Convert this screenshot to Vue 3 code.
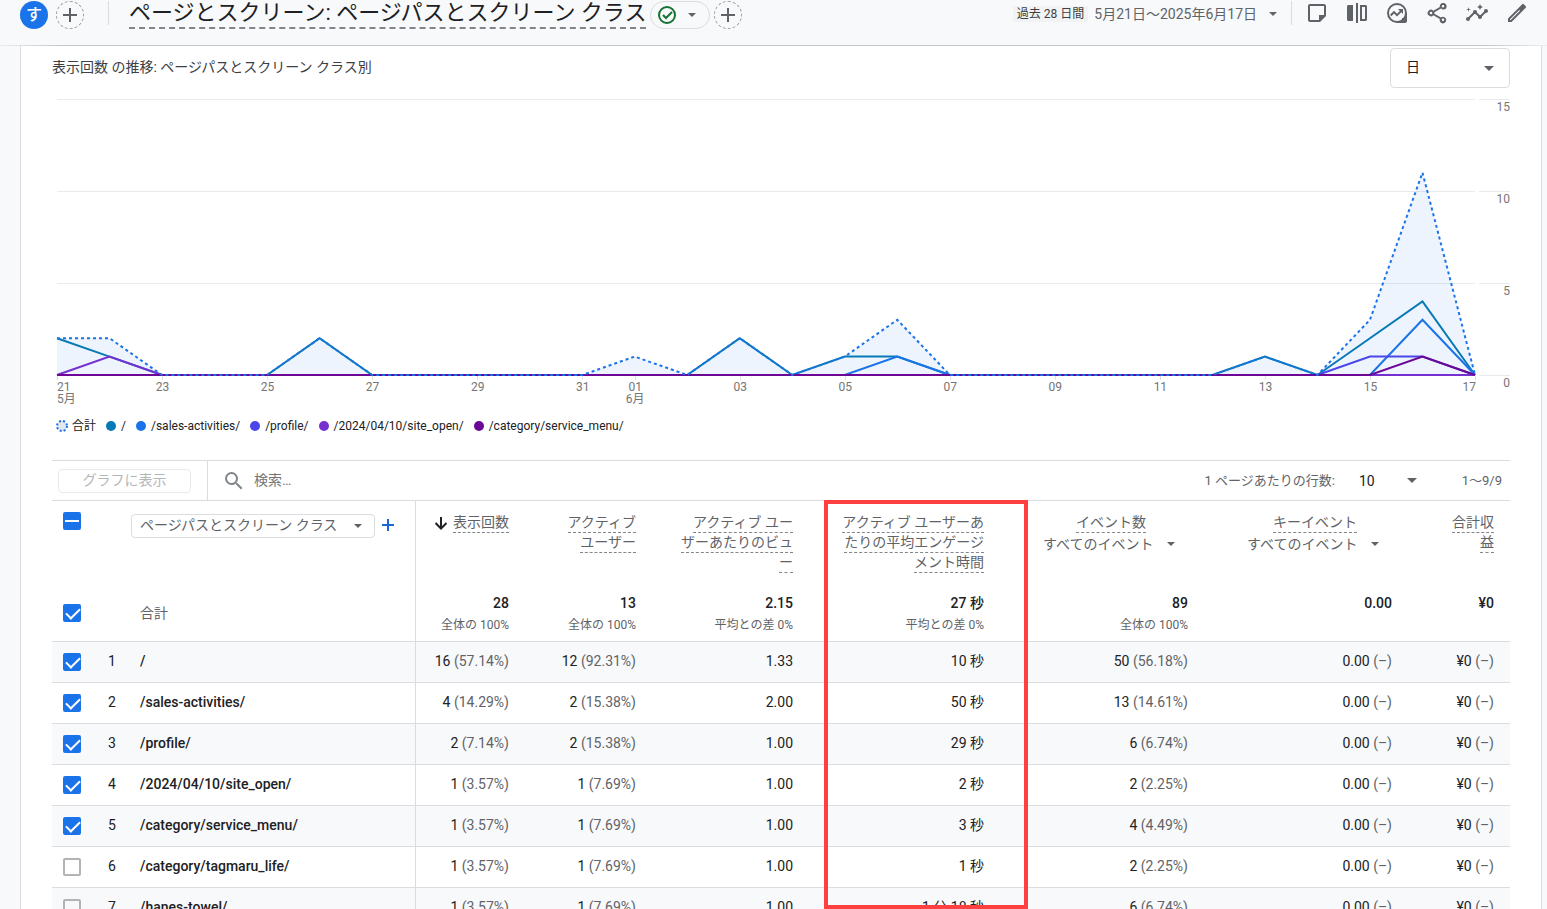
<script setup>
import { ref } from 'vue'

const icons = [
  { label: 'メモ', paths: ['M19 5v9h-5v5H5V5h14m0-2H5c-1.1 0-2 .9-2 2v14c0 1.1.9 2 2 2h10l6-6V5c0-1.100-.9-2-2-2z'] },
  { label: '比較', paths: ['M3.500 4H8v16H3.500C2.700 20 2 19.300 2 18.500v-13C2 4.700 2.700 4 3.500 4zM11 2h2v20h-2zM15 4h5.500c.8 0 1.500.7 1.500 1.500v13c0 .8-.7 1.500-1.500 1.500H15V4zm2 2v12h3V6h-3z'] },
  { label: 'インサイト', paths: ['M12 2a10 10 0 1 0 0 20h8a2 2 0 0 0 2-2v-8A10 10 0 0 0 12 2zm0 2a8 8 0 1 1 0 16 8 8 0 0 1 0-16z', 'M13 8h5v5l-1.700-1.700-4.300 4.300-3-3-2.600 2.600L5 13.800l4-4 3 3 2.900-2.900z', 'M17 17h4v4h-4z'] },
  { label: '共有', paths: ['M18 2a3.300 3.300 0 0 0-3.200 4L8.300 9.700a3.300 3.300 0 1 0 0 4.600l6.500 3.700A3.300 3.300 0 1 0 16 16.400l-6.600-3.700c.1-.5.1-.9 0-1.400L16 7.600A3.300 3.300 0 1 0 18 2zm0 2a1.300 1.300 0 1 1 0 2.600A1.300 1.300 0 0 1 18 4zM6 10.700a1.300 1.300 0 1 1 0 2.600 1.300 1.300 0 0 1 0-2.600zm12 6.700a1.300 1.300 0 1 1 0 2.600 1.300 1.300 0 0 1 0-2.600z'] },
  { label: '分析情報', paths: ['M21 8c-1.450 0-2.260 1.440-1.930 2.510l-3.550 3.560c-.3-.09-.74-.09-1.040 0l-2.550-2.550C12.270 10.450 11.460 9 10 9c-1.450 0-2.270 1.440-1.930 2.520l-4.560 4.550C2.440 15.740 1 16.550 1 18c0 1.100.9 2 2 2 1.450 0 2.260-1.440 1.930-2.510l4.550-4.560c.3.09.74.09 1.040 0l2.550 2.550C12.730 16.550 13.540 18 15 18c1.450 0 2.270-1.440 1.930-2.520l3.560-3.550C21.560 12.260 23 11.450 23 10c0-1.100-.9-2-2-2z', 'M15 9l.94-2.070L18 6l-2.060-.93L15 3l-.92 2.070L12 6l2.080.93zM3.500 11L4 9l2-.5L4 8l-.5-2L3 8l-2 .5L3 9z'] },
  { label: '編集', paths: ['M3 17.460V21h3.540L17.800 9.740 14.260 6.200 3 17.460zM5.700 19H5v-.7l9.260-9.270.71.71L5.700 19zM20.700 6.840a1.200 1.200 0 0 0 0-1.700L18.860 3.300a1.200 1.200 0 0 0-1.700 0l-2.900 2.900 3.540 3.540z'] }
]

const DAYS = 27
const make = (points) => Array.from({ length: DAYS + 1 }, (_, i) => points[i] || 0)
const series = [
  { name: '/', color: '#077ab5', values: make({ 0: 2, 1: 1, 5: 2, 13: 2, 15: 1, 16: 1, 23: 1, 25: 2, 26: 4 }) },
  { name: '/sales-activities/', color: '#1a73e8', values: make({ 16: 1, 26: 3 }) },
  { name: '/profile/', color: '#4a46ea', values: make({ 25: 1, 26: 1 }) },
  { name: '/2024/04/10/site_open/', color: '#7530cf', values: make({ 1: 1 }) },
  { name: '/category/service_menu/', color: '#6c0796', values: make({ 26: 1 }) }
]
const total = make({ 0: 2, 1: 2, 5: 2, 11: 1, 13: 2, 15: 1, 16: 3, 23: 1, 25: 3, 26: 11 })
const line = (values) => values.map((v, i) => `${(i * 1418) / DAYS},${276 - v * 18.4}`).join(' ')
const area = `0,276 ${line(total)} 1418,276`

const ticks = [
  [0, '21', '5月'], [2, '23'], [4, '25'], [6, '27'], [8, '29'], [10, '31'], [11, '01', '6月'], [13, '03'],
  [15, '05'], [17, '07'], [19, '09'], [21, '11'], [23, '13'], [25, '15'], [27, '17']
].map(([day, text, month]) => ({ day, text, month, left: `${(day / DAYS) * 100}%` }))

const columns = [
  { lines: ['表示回数'], sorted: true, total: '28', note: '全体の 100%' },
  { lines: ['アクティブ', 'ユーザー'], total: '13', note: '全体の 100%' },
  { lines: ['アクティブ ユー', 'ザーあたりのビュ', 'ー'], total: '2.15', note: '平均との差 0%' },
  { lines: ['アクティブ ユーザーあ', 'たりの平均エンゲージ', 'メント時間'], total: '27 秒', note: '平均との差 0%' },
  { lines: ['イベント数'], filter: 'event', total: '89', note: '全体の 100%' },
  { lines: ['キーイベント'], filter: 'key', total: '0.00', note: '' },
  { lines: ['合計収', '益'], total: '¥0', note: '' }
]

const rows = ref([
  { on: true, path: '/', cells: ['16 (57.14%)', '12 (92.31%)', '1.33', '10 秒', '50 (56.18%)'] },
  { on: true, path: '/sales-activities/', cells: ['4 (14.29%)', '2 (15.38%)', '2.00', '50 秒', '13 (14.61%)'] },
  { on: true, path: '/profile/', cells: ['2 (7.14%)', '2 (15.38%)', '1.00', '29 秒', '6 (6.74%)'] },
  { on: true, path: '/2024/04/10/site_open/', cells: ['1 (3.57%)', '1 (7.69%)', '1.00', '2 秒', '2 (2.25%)'] },
  { on: true, path: '/category/service_menu/', cells: ['1 (3.57%)', '1 (7.69%)', '1.00', '3 秒', '4 (4.49%)'] },
  { on: false, path: '/category/tagmaru_life/', cells: ['1 (3.57%)', '1 (7.69%)', '1.00', '1 秒', '2 (2.25%)'] },
  { on: false, path: '/hanes-towel/', cells: ['1 (3.57%)', '1 (7.69%)', '1.00', '1 分 18 秒', '6 (6.74%)'] }
])
const split = (text) => {
  const at = text.indexOf(' (')
  return at < 0 ? [text, ''] : [text.slice(0, at), text.slice(at)]
}
const cellsOf = (row) => [...row.cells, '0.00 (–)', '¥0 (–)'].map(split)
const allOn = ref(true)
</script>

<template>
  <div class="page">
    <header class="topbar">
      <button class="avatar" type="button">す</button>
      <button class="round" type="button" aria-label="比較を追加">
        <svg width="16" height="16" viewBox="0 0 16 16"><path d="M8 1v14M1 8h14" /></svg>
      </button>
      <span class="rule rule-left"></span>
      <h1>ページとスクリーン: ページパスとスクリーン クラス</h1>
      <button class="pill" type="button" aria-label="レポートのステータス">
        <svg class="status" width="20" height="20" viewBox="0 0 20 20"><circle cx="10" cy="10" r="8" /><path d="M6 10l3 3 6-6" /></svg>
        <i class="caret"></i>
      </button>
      <button class="round" type="button" aria-label="フィルタを追加">
        <svg width="16" height="16" viewBox="0 0 16 16"><path d="M8 1v14M1 8h14" /></svg>
      </button>
      <button class="dates" type="button">
        <span class="badge">過去 28 日間</span>
        <span>5月21日〜2025年6月17日</span>
        <i class="caret"></i>
      </button>
      <span class="rule"></span>
      <nav class="tools">
        <button v-for="icon in icons" :key="icon.label" type="button" :aria-label="icon.label">
          <svg width="24" height="24" viewBox="0 0 24 24"><path v-for="d in icon.paths" :key="d" :d="d" fill-rule="evenodd" /></svg>
        </button>
      </nav>
    </header>

    <main class="card">
      <div class="card-head">
        <h2>表示回数 の推移: ページパスとスクリーン クラス別</h2>
        <div class="select period">
          <select aria-label="期間の単位"><option>日</option></select>
          <i class="caret big"></i>
        </div>
      </div>

      <div class="chart">
        <div class="plot">
          <svg viewBox="0 0 1418 276" preserveAspectRatio="none">
            <path class="grid" d="M0 .5H1418M0 92.500H1418M0 184.500H1418" />
            <polygon class="area" :points="area" />
            <polyline v-for="s in series" :key="s.name" :points="line(s.values)" :stroke="s.color" />
            <polyline class="total" :points="line(total)" />
          </svg>
          <div v-for="t in ticks" :key="t.day" class="tick" :class="{ first: t.day === 0, last: t.day === 27 }" :style="{ left: t.left }">
            <span>{{ t.text }}<template v-if="t.month"><br>{{ t.month }}</template></span>
          </div>
        </div>
        <ul class="scale"><li>15</li><li>10</li><li>5</li><li>0</li></ul>
      </div>

      <ul class="legend">
        <li class="sum">
          <svg width="12" height="12" viewBox="0 0 12 12"><circle class="ring" cx="6" cy="6" r="5" /></svg>合計
        </li>
        <li v-for="s in series" :key="s.name">
          <svg width="10" height="10" viewBox="0 0 10 10"><circle cx="5" cy="5" r="5" :fill="s.color" /></svg>{{ s.name }}
        </li>
      </ul>

      <div class="toolbar">
        <div class="plot-action"><button type="button" disabled>グラフに表示</button></div>
        <label class="search">
          <svg width="24" height="24" viewBox="0 0 24 24"><path d="M15.500 14h-.79l-.28-.27A6.470 6.470 0 0 0 16 9.500 6.500 6.500 0 1 0 9.500 16c1.610 0 3.090-.59 4.230-1.570l.27.28v.79l5 4.990L20.490 19l-4.990-5zm-6 0C7.010 14 5 11.990 5 9.500S7.010 5 9.500 5 14 7.010 14 9.500 11.990 14 9.500 14z" /></svg>
          <input type="text" placeholder="検索…" aria-label="検索">
        </label>
        <label class="per-page" for="per-page">1 ページあたりの行数:</label>
        <div class="select count">
          <select id="per-page"><option>10</option></select>
          <i class="caret big"></i>
        </div>
        <span class="range">1〜9/9</span>
      </div>

      <div class="table-area">
        <table>
          <colgroup>
            <col class="w-check"><col class="w-index"><col class="w-name"><col class="w-views"><col class="w-users">
            <col class="w-ratio"><col class="w-time"><col class="w-events"><col class="w-key"><col class="w-revenue">
          </colgroup>
          <thead>
            <tr class="heads">
              <th><input type="checkbox" class="mixed" aria-label="すべての行"></th>
              <th></th>
              <th>
                <div class="dimension">
                  <div class="select dim">
                    <select aria-label="ディメンション"><option>ページパスとスクリーン クラス</option></select>
                    <i class="caret"></i>
                  </div>
                  <button type="button" aria-label="ディメンションを追加">
                    <svg width="12" height="12" viewBox="0 0 12 12"><path d="M6 0v12M0 6h12" /></svg>
                  </button>
                </div>
              </th>
              <th v-for="c in columns" :key="c.lines[0] + c.lines[1]" class="metric" :class="c.filter">
                <div v-for="(l, i) in c.lines" :key="i" class="line">
                  <svg v-if="c.sorted" width="14" height="14" viewBox="0 0 14 14"><path d="M7 1v11M1.500 7L7 12.500 12.500 7" /></svg>
                  <span>{{ l }}</span>
                </div>
                <div v-if="c.filter" class="select scope">
                  <select :aria-label="c.lines[0]"><option>すべてのイベント</option></select>
                  <i class="caret"></i>
                </div>
              </th>
            </tr>
            <tr class="totals">
              <td><input v-model="allOn" type="checkbox" aria-label="合計"></td>
              <td></td>
              <td class="name">合計</td>
              <td v-for="c in columns" :key="c.lines[0] + c.lines[1]" class="metric"><b>{{ c.total }}</b><small>{{ c.note }}</small></td>
            </tr>
          </thead>
          <tbody>
            <tr v-for="(row, i) in rows" :key="row.path">
              <td><input v-model="row.on" type="checkbox" :aria-label="row.path"></td>
              <td class="index">{{ i + 1 }}</td>
              <td class="name">{{ row.path }}</td>
              <td v-for="(cell, k) in cellsOf(row)" :key="k" class="metric">{{ cell[0] }}<span>{{ cell[1] }}</span></td>
            </tr>
          </tbody>
        </table>
        <div class="highlight"></div>
      </div>
    </main>
  </div>
</template>

<style>
body {
  margin: 0;
  overflow: hidden;
}
</style>

<style scoped>
.page,
.page * {
  box-sizing: border-box;
}
.page {
  height: 100vh;
  overflow: hidden;
  display: flex;
  flex-direction: column;
  background: #f8f9fb;
  color: #202124;
  font: 14px/20px Roboto, "Noto Sans CJK JP", sans-serif;
}
button,
input,
select {
  margin: 0;
  padding: 0;
  border: 0;
  background: none;
  color: inherit;
  font: inherit;
}
ul {
  list-style: none;
  margin: 0;
  padding: 0;
}
.caret {
  flex: none;
  border: 4px solid transparent;
  border-top-color: #5f6368;
  border-bottom: 0;
}
.caret.big {
  border-width: 5px 5px 0;
}
.topbar {
  flex: none;
  display: flex;
  align-items: center;
  height: 46px;
  padding: 0 18px 16px 20px;
  border-bottom: 1px solid;
  border-image: linear-gradient(90deg, #eceef0, #c4c6c9 4%, #c4c6c9 96%, #eceef0) 1;
}
.avatar {
  width: 28px;
  height: 28px;
  border-radius: 50%;
  background: #1a73e8;
  color: #fff;
  font-size: 16px;
  font-weight: 500;
}
.round {
  display: flex;
  align-items: center;
  justify-content: center;
  width: 28px;
  height: 28px;
  margin-left: 8px;
  border: 1px dashed #9aa0a6;
  border-radius: 50%;
}
.pill + .round {
  margin-left: 4px;
}
.round path {
  stroke: #5f6368;
  stroke-width: 2;
}
.rule {
  width: 1px;
  height: 24px;
  margin-bottom: 4px;
  background: #dadce0;
}
.rule-left {
  margin-left: 24px;
}
h1 {
  margin: 0 4px 1px 20px;
  border-bottom: 2px dashed #80868b;
  font-size: 22px;
  line-height: 28px;
  font-weight: 400;
  white-space: nowrap;
}
.pill {
  display: flex;
  align-items: center;
  gap: 11px;
  width: 60px;
  height: 28px;
  padding-left: 6px;
  border: 1px solid #dadce0;
  border-radius: 14px;
}
.status {
  fill: none;
  stroke: #137333;
  stroke-width: 2;
}
.dates {
  display: flex;
  align-items: center;
  gap: 6px;
  margin: 0 14px 2px auto;
  color: #5f6368;
  white-space: nowrap;
}
.dates .caret {
  margin-left: 6px;
}
.badge {
  padding: 0 4px;
  background: #f1f3f4;
  color: #3c4043;
  font-size: 12px;
  line-height: 16px;
}
.tools {
  display: flex;
  gap: 16px;
  margin: 0 0 3px 13px;
}
.tools button {
  height: 24px;
}
.tools svg {
  display: block;
  fill: #5f6368;
}
.card {
  flex: 1;
  min-height: 0;
  display: flex;
  flex-direction: column;
  margin: 0 5px 0 20px;
  padding: 2px 31px 0;
  border: solid #dadce0;
  border-width: 0 1px;
  background: #fff;
}
.card-head {
  display: flex;
  align-items: center;
  justify-content: space-between;
  height: 40px;
}
h2 {
  margin: 0 0 2px;
  color: #3c4043;
  font-size: 14px;
  font-weight: 400;
}
.select {
  position: relative;
  display: flex;
  align-items: center;
}
.select select {
  appearance: none;
  width: 100%;
  height: 100%;
}
.select .caret {
  position: absolute;
  right: 15px;
  pointer-events: none;
}
.period {
  width: 120px;
  height: 40px;
  border: 1px solid #dadce0;
  border-radius: 4px;
}
.period select {
  padding: 0 0 2px 15px;
}
.chart {
  display: flex;
  gap: 4px;
  height: 318px;
  padding: 11px 0 0 5px;
}
.plot {
  position: relative;
  flex: 1;
  height: 277px;
}
.plot > svg {
  display: block;
  width: 100%;
  height: 276px;
  overflow: visible;
}
.plot svg * {
  vector-effect: non-scaling-stroke;
}
.plot polyline {
  fill: none;
  stroke-width: 2;
}
.plot .total {
  stroke: #1a73e8;
  stroke-dasharray: 3 3;
}
.grid {
  stroke: #e8eaed;
}
.area {
  fill: #1a73e8;
  fill-opacity: 0.08;
}
.tick {
  position: absolute;
  top: 277px;
  display: flex;
  justify-content: center;
  width: 1px;
  padding-top: 5px;
  color: #757575;
  font-size: 12px;
  line-height: 12px;
  text-align: center;
  white-space: nowrap;
}
.tick::before {
  content: "";
  position: absolute;
  top: 0;
  left: 0;
  width: 1px;
  height: 4px;
  background: #e0e0e0;
}
.tick.first {
  justify-content: flex-start;
  text-align: left;
}
.tick.last {
  justify-content: flex-end;
}
.scale {
  width: 31px;
  color: #757575;
  font-size: 12px;
  line-height: 14px;
  text-align: right;
}
.scale li {
  height: 92px;
  border-top: 1px solid #e8eaed;
}
.scale li:last-child {
  height: 20px;
}
.legend {
  display: flex;
  align-items: center;
  gap: 10px;
  height: 40px;
  padding-left: 4px;
  font-size: 12px;
  white-space: nowrap;
}
.legend li {
  display: flex;
  align-items: center;
  gap: 5px;
}
.legend .sum {
  gap: 4px;
}
.ring {
  fill: #e4e7eb;
  stroke: #1a73e8;
  stroke-width: 2;
  stroke-dasharray: 2 2;
}
.toolbar {
  flex: none;
  display: flex;
  align-items: center;
  height: 41px;
  margin-top: 14px;
  border: solid #dadce0;
  border-width: 1px 0;
}
.plot-action {
  display: flex;
  align-items: center;
  height: 100%;
  padding: 0 16px 0 6px;
  border-right: 1px solid #dadce0;
}
.plot-action button {
  width: 133px;
  height: 24px;
  padding-bottom: 2px;
  border: 1px solid #e8eaed;
  border-radius: 4px;
  color: #b4b7ba;
  line-height: 20px;
}
.search {
  flex: 1;
  display: flex;
  align-items: center;
  gap: 8px;
  padding-left: 14px;
}
.search svg {
  fill: #80868b;
}
.search input {
  flex: 1;
  padding-bottom: 2px;
  outline: 0;
}
.search input::placeholder {
  color: #757575;
  opacity: 1;
}
.per-page,
.range {
  color: #5f6368;
  font-size: 13px;
  white-space: nowrap;
}
.count {
  width: 71px;
  height: 32px;
  margin-left: 16px;
}
.count select {
  padding-left: 8px;
}
.count .caret {
  right: 5px;
}
.range {
  width: 88px;
  padding-right: 8px;
  text-align: right;
}
.table-area {
  position: relative;
  flex: 1;
  min-height: 0;
}
.highlight {
  position: absolute;
  top: -1px;
  bottom: 0;
  left: 772px;
  width: 204px;
  border: 4px solid #ff4040;
  pointer-events: none;
}
table {
  width: 100%;
  table-layout: fixed;
  border-collapse: separate;
  border-spacing: 0;
}
.w-check { width: 40px; }
.w-index { width: 39px; }
.w-name { width: 284px; }
.w-views { width: 110px; }
.w-users { width: 127px; }
.w-ratio { width: 157px; }
.w-time { width: 191px; }
.w-events { width: 204px; }
.w-key { width: 204px; }
.w-revenue { width: 102px; }
th,
td {
  padding: 0;
  font-weight: 400;
  text-align: left;
  white-space: nowrap;
}
td {
  height: 41px;
  border-bottom: 1px solid #dadce0;
}
th:nth-child(4),
td:nth-child(4) {
  border-left: 1px solid #dadce0;
}
tbody tr:nth-child(odd) {
  background: #f8f9fb;
}
tbody td:not(:first-child) {
  padding-bottom: 2px;
}
.heads th {
  height: 89px;
  padding-top: 12px;
  vertical-align: top;
}
.heads th:first-child {
  padding-top: 11px;
}
.totals td {
  height: 52px;
  padding-bottom: 6px;
}
.totals .name {
  color: #5f6368;
  font-weight: 400;
}
.totals td.metric {
  padding: 1px 16px 0 0;
  vertical-align: top;
}
.metric {
  padding-right: 16px;
  text-align: right;
}
.metric b,
.metric small {
  display: block;
}
.metric b {
  line-height: 24px;
  font-weight: 500;
}
.metric small {
  color: #5f6368;
  font-size: 12px;
}
tbody .metric span {
  color: #5f6368;
  white-space: pre;
}
.index {
  padding-left: 1px;
  text-align: center;
}
.name {
  padding-left: 9px;
  font-weight: 500;
}
.line {
  display: flex;
  align-items: center;
  justify-content: flex-end;
  gap: 5px;
  height: 20px;
  color: #5f6368;
}
.line span {
  height: 20px;
  border-bottom: 1px dashed #80868b;
  line-height: 19px;
}
.line svg {
  fill: none;
  stroke: #202124;
  stroke-width: 2;
}
.event .line {
  padding-right: 42px;
}
.key .line {
  padding-right: 35px;
}
.scope {
  width: 145px;
  height: 22px;
  margin-left: auto;
  color: #5f6368;
}
.scope .caret {
  right: 13px;
}
.dimension {
  display: flex;
  align-items: center;
  padding-top: 1px;
}
.dim {
  width: 244px;
  height: 24px;
  border: 1px solid #dadce0;
  border-radius: 4px;
  color: #5f6368;
}
.dim select {
  padding: 0 0 2px 8px;
}
.dim .caret {
  right: 12px;
}
.dimension button {
  display: flex;
  margin: 0 0 2px 7px;
}
.dimension path {
  stroke: #1967d2;
  stroke-width: 2;
}
input[type="checkbox"] {
  appearance: none;
  position: relative;
  display: block;
  width: 18px;
  height: 18px;
  margin-left: 11px;
  border: 2px solid #b3b3b3;
  border-radius: 2px;
}
input[type="checkbox"]:checked,
input.mixed {
  border-color: #1a73e8;
  background: #1a73e8;
}
input[type="checkbox"]:checked::after {
  content: "";
  position: absolute;
  left: 4px;
  top: -1px;
  width: 6px;
  height: 12px;
  border: solid #fff;
  border-width: 0 2px 2px 0;
  transform: rotate(45deg);
}
input.mixed::after {
  content: "";
  position: absolute;
  left: 0;
  top: 6px;
  width: 14px;
  height: 2px;
  background: #fff;
}
</style>
